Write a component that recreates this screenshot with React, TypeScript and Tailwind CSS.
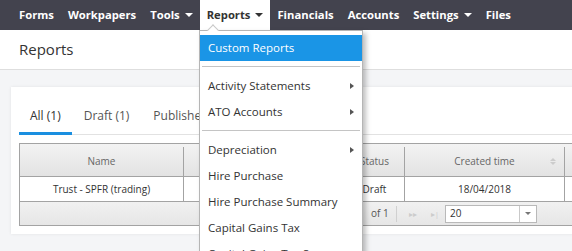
import React from "react";

const navItems = [
  { label: "Forms" },
  { label: "Workpapers" },
  { label: "Tools", caret: true },
  { label: "Reports", caret: true, active: true },
  { label: "Financials" },
  { label: "Accounts" },
  { label: "Settings", caret: true },
  { label: "Files" },
];

type MenuItem = { label: string; sub?: boolean; active?: boolean } | "divider";

const menuItems: MenuItem[] = [
  { label: "Custom Reports", active: true },
  "divider",
  { label: "Activity Statements", sub: true },
  { label: "ATO Accounts", sub: true },
  "divider",
  { label: "Depreciation", sub: true },
  { label: "Hire Purchase" },
  { label: "Hire Purchase Summary" },
  { label: "Capital Gains Tax" },
  { label: "Capital Gains Tax Summary" },
];

function Caret({ dark }: { dark?: boolean }) {
  return (
    <span
      className={`ml-[5px] inline-block h-0 w-0 border-x-[4px] border-t-[4px] border-x-transparent ${
        dark ? "border-t-[#333]" : "border-t-white"
      }`}
    />
  );
}

function ReportsMenu() {
  return (
    <div className="absolute left-[199px] top-[30px] z-20 w-[164px] border border-[#b5b5b5] bg-white pt-[4px] shadow-[3px_3px_5px_rgba(0,0,0,0.25)]">
      {/* little pointer */}
      <div className="absolute -top-[5px] left-[9px] h-[8px] w-[8px] rotate-45 border-l border-t border-[#c8c8c8] bg-white" />
      {menuItems.map((item, idx) =>
        item === "divider" ? (
          <div key={idx} className="mx-[2px] mb-[6px] mt-[5px] h-px bg-[#c4c4c4]" />
        ) : (
          <div
            key={idx}
            className={`relative flex h-[26px] items-center pl-[8px] text-[11.5px] ${
              item.active ? "bg-[#1a95e6] text-white" : "text-[#333]"
            }`}
          >
            {item.label}
            {item.sub && (
              <span className="absolute right-[8px] h-0 w-0 border-y-[3.5px] border-l-[4px] border-y-transparent border-l-[#555]" />
            )}
          </div>
        )
      )}
    </div>
  );
}

export default function App() {
  return (
    <div
      className="relative h-[251px] w-full overflow-hidden bg-[#f4f5f7]"
      style={{ fontFamily: '"Open Sans", "Liberation Sans", sans-serif' }}
    >
      {/* top navigation */}
      <nav className="flex h-[30px] items-stretch bg-[#43434e] pl-[12px]">
        {navItems.map((n) => (
          <div
            key={n.label}
            className={`flex items-center px-[7px] text-[11.25px] font-bold ${
              n.active ? "bg-white text-[#333]" : "text-white"
            }`}
          >
            {n.label}
            {n.caret && <Caret dark={n.active} />}
          </div>
        ))}
      </nav>
      <ReportsMenu />

      {/* page header */}
      <div className="flex h-[40px] items-center border-b border-[#dedede] bg-white pl-[19px]">
        <h1 className="text-[15px] text-[#333]">Reports</h1>
      </div>

      {/* card */}
      <div className="ml-[11px] mt-[17px] w-[700px] bg-white px-[8px] pb-[8px] pt-[20px] shadow-[0_0_3px_rgba(0,0,0,0.08)]">
        <div className="flex border-b border-[#e2e2e2] text-[12px]">
          <div className="-mb-px border-b-[3px] border-[#1a8fe0] px-[11px] pb-[7px] leading-[18px] text-[#333]">
            All (1)
          </div>
          <div className="-mb-px border-b-[3px] border-transparent px-[12px] pb-[7px] leading-[18px] text-[#555]">
            Draft (1)
          </div>
          <div className="-mb-px border-b-[3px] border-transparent px-[12px] pb-[7px] leading-[18px] text-[#555]">
            Published (0)
          </div>
        </div>

        <div className="mt-[8px] border border-[#a3a3a3] text-[10px]">
          {/* header */}
          <div className="flex h-[33px] border-b border-[#a3a3a3] bg-gradient-to-b from-[#f3f3f3] to-[#e3e3e3] pt-[3px] text-[#666]">
            <div className="flex w-[164px] items-center justify-center border-r border-[#a3a3a3]">Name</div>
            <div className="flex w-[161px] items-center justify-center border-r border-[#a3a3a3]">Template</div>
            <div className="flex w-[60px] items-center justify-center border-r border-[#a3a3a3]">Status</div>
            <div className="relative flex w-[160px] items-center justify-center border-r border-[#a3a3a3]">
              Created time
              <span className="absolute right-[8px] flex flex-col gap-[1px]">
                <span className="h-0 w-0 border-x-[3px] border-b-[3px] border-x-transparent border-b-[#ccc]" />
                <span className="h-0 w-0 border-x-[3px] border-t-[3px] border-x-transparent border-t-[#ccc]" />
              </span>
            </div>
            <div className="flex-1" />
          </div>
          {/* row */}
          <div className="flex h-[25px] border-b border-[#a3a3a3] text-[#333]">
            <div className="flex w-[164px] items-center justify-center border-r border-[#a3a3a3]">Trust - SPFR (trading)</div>
            <div className="flex w-[161px] items-center justify-center border-r border-[#a3a3a3]">Trust</div>
            <div className="flex w-[60px] items-center justify-center border-r border-[#a3a3a3]">Draft</div>
            <div className="flex w-[160px] items-center justify-center border-r border-[#a3a3a3]">18/04/2018</div>
            <div className="flex-1" />
          </div>
          {/* pager */}
          <div className="flex h-[23px] items-center bg-gradient-to-b from-[#f1f1f1] to-[#e6e6e6] pl-[351px] text-[#555]">
            <span>of 1</span>
            <span className="ml-[7px] h-[16px] w-px bg-[#d0d0d0]" />
            <span className="ml-[12px] text-[8px] text-[#ccc]">▸▸</span>
            <span className="ml-[14px] text-[8px] text-[#ccc]">▸|</span>
            <div className="ml-[6px] flex h-[18px] w-[92px] items-stretch border border-[#b9b9b9] bg-white text-[#333]">
              <span className="flex flex-1 items-center pl-[4px]">20</span>
              <span className="flex w-[17px] items-center justify-center border-l border-[#c9c9c9]">
                <span className="h-0 w-0 border-x-[3px] border-t-[3px] border-x-transparent border-t-[#777]" />
              </span>
            </div>
          </div>
        </div>
      </div>
    </div>
  );
}
